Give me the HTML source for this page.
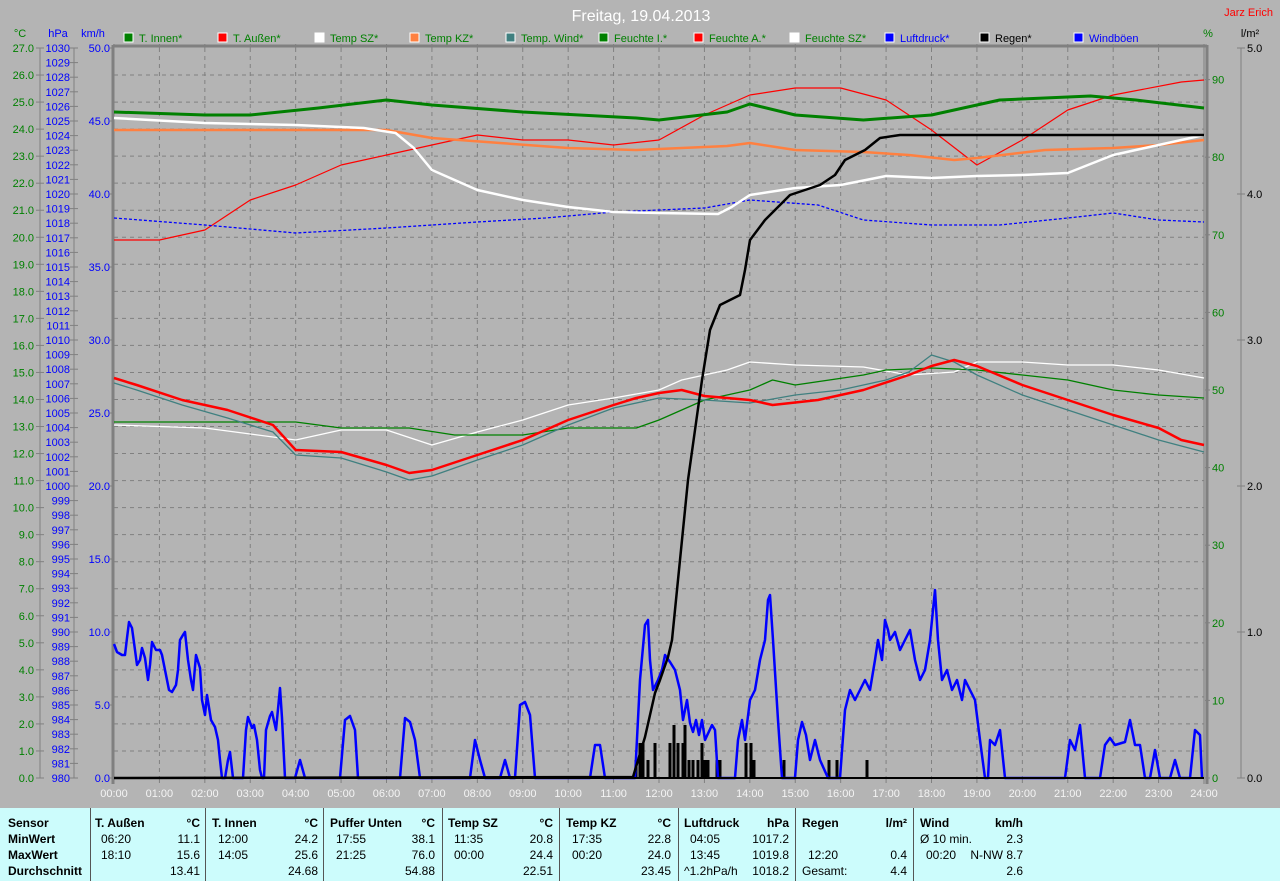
<!DOCTYPE html>
<html><head><meta charset="utf-8">
<style>
html,body{margin:0;padding:0;background:#b4b4b4;}
body{width:1280px;height:881px;overflow:hidden;position:relative;font-family:"Liberation Sans",Arial,sans-serif;}
svg{position:absolute;left:0;top:0;}
#tbl{position:absolute;left:0;top:808px;width:1280px;height:73px;background:#ccfcfc;}
.c{position:absolute;top:0;height:73px;border-left:1px solid #555;}
.t{position:absolute;font-size:12px;color:#000;white-space:nowrap;}
.b{font-weight:bold;}
.r{text-align:right;}
</style></head><body>
<svg id="s" width="1280" height="881" xmlns="http://www.w3.org/2000/svg" font-family="Liberation Sans, Arial, sans-serif"></svg>
<div id="tbl"></div>
<script>
const S=document.getElementById('s');let h='';
const X=t=>114+t*45.417;
const L=114,R=1204,T=48,B=778;
// grid
for(let i=1;i<27;i++){const y=T+i*(730/27);h+=`<line x1="${L}" y1="${y}" x2="${R}" y2="${y}" stroke="#808080" stroke-dasharray="4,4"/>`;}
for(let i=1;i<24;i++){const x=X(i);h+=`<line x1="${x}" y1="${T}" x2="${x}" y2="${B}" stroke="#808080" stroke-dasharray="4,4"/>`;}
// frame
h+=`<line x1="${L-1}" y1="${T-2}" x2="${R+3}" y2="${T-2}" stroke="#808080" stroke-width="3"/>`;
h+=`<line x1="${L-1}" y1="${T-3}" x2="${L-1}" y2="${B+6}" stroke="#808080" stroke-width="3"/>`;
h+=`<line x1="${R}" y1="${T-3}" x2="${R}" y2="${B+6}" stroke="#808080" stroke-width="1"/>`;
h+=`<line x1="${R+3}" y1="${T-3}" x2="${R+3}" y2="${B+6}" stroke="#808080" stroke-width="3"/>`;
// x ticks/labels
for(let i=0;i<=24;i++){const x=X(i);h+=`<line x1="${x}" y1="${B}" x2="${x}" y2="${B+5}" stroke="#808080"/><text x="${x}" y="797" font-size="11" fill="#f4f4f4" text-anchor="middle">${String(i).padStart(2,'0')}:00</text>`;
 h+=`<line x1="${x}" y1="${T-4}" x2="${x}" y2="${T}" stroke="#808080"/>`;}
// left axes
h+=`<line x1="40" y1="${T}" x2="40" y2="${B}" stroke="#808080"/><line x1="74" y1="${T}" x2="74" y2="${B}" stroke="#808080"/>`;
for(let i=0;i<=27;i++){const y=B-i*(730/27);h+=`<line x1="36" y1="${y}" x2="44" y2="${y}" stroke="#808080"/><text x="34" y="${y+4}" font-size="11" fill="#008000" text-anchor="end">${i.toFixed(1)}</text>`;}
for(let i=0;i<=50;i++){const y=B-i*14.6;h+=`<line x1="70" y1="${y}" x2="78" y2="${y}" stroke="#808080"/><text x="70" y="${y+4}" font-size="11" fill="#0000ff" text-anchor="end">${980+i}</text>`;}
for(let i=0;i<=10;i++){const y=B-i*73;h+=`<line x1="110" y1="${y}" x2="114" y2="${y}" stroke="#808080"/><text x="110" y="${y+4}" font-size="11" fill="#0000ff" text-anchor="end">${(i*5).toFixed(1)}</text>`;}
h+=`<text x="20" y="37" font-size="11" fill="#008000" text-anchor="middle">°C</text><text x="58" y="37" font-size="11" fill="#0000ff" text-anchor="middle">hPa</text><text x="93" y="37" font-size="11" fill="#0000ff" text-anchor="middle">km/h</text>`;
// right axes
for(let i=0;i<=9;i++){const y=B-i*77.6;h+=`<line x1="1205" y1="${y}" x2="1210" y2="${y}" stroke="#808080"/><text x="1212" y="${y+4}" font-size="11" fill="#008000">${i*10}</text>`;}
h+=`<line x1="1241" y1="${T}" x2="1241" y2="${B}" stroke="#808080"/>`;
for(let i=0;i<=5;i++){const y=B-i*146;h+=`<line x1="1237" y1="${y}" x2="1245" y2="${y}" stroke="#808080"/><text x="1247" y="${y+4}" font-size="11" fill="#000">${i.toFixed(1)}</text>`;}
h+=`<text x="1208" y="37" font-size="11" fill="#008000" text-anchor="middle">%</text><text x="1250" y="37" font-size="11" fill="#000" text-anchor="middle">l/m²</text>`;
// title
h+=`<text x="641" y="21" font-size="16" fill="#ffffff" text-anchor="middle">Freitag, 19.04.2013</text><text x="1273" y="16" font-size="11" fill="#ff0000" text-anchor="end">Jarz Erich</text>`;
// legend
const lg=[[124,'#008000','T. Innen*','#008000'],[218,'#ff0000','T. Außen*','#008000'],[315,'#ffffff','Temp SZ*','#008000'],[410,'#ff8040','Temp KZ*','#008000'],[506,'#408080','Temp. Wind*','#008000'],[599,'#008000','Feuchte I.*','#008000'],[694,'#ff0000','Feuchte A.*','#008000'],[790,'#ffffff','Feuchte SZ*','#008000'],[885,'#0000ff','Luftdruck*','#0000ff'],[980,'#000000','Regen*','#000000'],[1074,'#0000ff','Windböen','#0000ff']];
lg.forEach(([x,c,t,tc])=>{h+=`<rect x="${x}" y="33" width="9" height="9" fill="${c}" stroke="#fff"/><text x="${x+15}" y="42" font-size="11" fill="${tc}">${t}</text>`;});
function pl(pts,col,w,extra=''){h+=`<polyline fill="none" stroke="${col}" stroke-width="${w}" stroke-linejoin="round" ${extra} points="${pts.map(p=>p.join(',')).join(' ')}"/>`;}
const hp=a=>{const r=[];for(let i=0;i<a.length;i+=2)r.push([X(a[i]),a[i+1]]);return r;};
// rain bars
const bars=[[636,18],[640,35],[643,35],[648,18],[655,35],[670,35],[674,53],[678,35],[683,35],[685,53],[689,18],[693,18],[698,18],[702,35],[705,18],[708,18],[717,18],[720,18],[746,35],[751,35],[754,18],[784,18],[829,18],[837,18],[867,18]];
bars.forEach(([x,hh])=>{h+=`<rect x="${x-1.5}" y="${B-hh}" width="3" height="${hh}" fill="#000"/>`;});
// wind gusts
const wb=[[114,644],[117,652],[122,655],[125,655],[127,638],[129,622],[132,628],[135,650],[137,665],[140,660],[142,648],[145,658],[148,680],[150,665],[152,642],[156,650],[160,650],[162,655],[165,670],[169,690],[172,692],[176,685],[178,670],[180,640],[183,635],[185,632],[188,660],[191,680],[193,690],[196,655],[200,668],[202,700],[205,715],[207,695],[211,720],[215,727],[218,740],[220,760],[222,778],[225,778],[228,760],[230,752],[233,778],[243,778],[246,730],[248,717],[252,728],[254,725],[257,740],[260,770],[262,778],[264,778],[266,730],[270,716],[272,712],[276,730],[280,688],[282,718],[285,778],[295,778],[300,760],[305,778],[340,778],[345,720],[350,716],[355,730],[358,778],[400,778],[405,718],[410,722],[415,740],[420,778],[470,778],[475,740],[480,760],[485,778],[500,778],[505,760],[510,778],[515,778],[520,705],[525,702],[530,715],[535,778],[590,778],[595,745],[600,745],[605,778],[635,778],[640,680],[645,625],[648,620],[650,660],[653,690],[658,680],[662,670],[665,655],[670,662],[675,670],[680,690],[683,720],[687,700],[690,723],[693,732],[696,720],[699,735],[702,720],[705,740],[712,725],[715,730],[718,778],[735,778],[738,740],[742,720],[745,740],[750,700],[755,690],[760,660],[765,640],[768,600],[770,595],[773,640],[778,720],[782,778],[795,778],[798,740],[802,722],[806,735],[810,760],[815,740],[820,760],[828,778],[840,778],[845,710],[850,690],[855,700],[860,690],[865,680],[870,690],[875,660],[878,640],[882,660],[885,620],[888,630],[890,640],[895,632],[900,650],[905,640],[910,630],[915,660],[920,680],[925,670],[930,640],[935,590],[938,640],[942,680],[947,670],[952,690],[957,680],[962,700],[965,680],[970,690],[975,700],[980,740],[985,778],[988,778],[990,740],[995,745],[1000,730],[1005,778],[1065,778],[1070,740],[1075,750],[1080,725],[1085,778],[1100,778],[1105,745],[1110,738],[1115,745],[1125,742],[1130,720],[1135,745],[1140,745],[1145,778],[1150,778],[1155,750],[1160,778],[1170,778],[1175,760],[1180,778],[1190,778],[1195,730],[1200,735],[1202,778]];
pl(wb,'#0000ff',2.5);
h+=`<line x1="${L}" y1="${B}" x2="${R}" y2="${B}" stroke="#000" stroke-width="2"/>`;
// lower group
pl(hp([0,425,2,428,4,440,5,430,6,430,7,445,8,432,9,420,10,405,11,398,12,390,12.5,380,13.5,370,14,362,15,365,16.5,367,17.5,375,18.5,372,19,362,20,362,21,365,22,365,23,370,24,378]),'#ffffff',1.3);
pl(hp([0,422,4,422,5,428,6.5,428,7.5,435,9,435,10,428,11.5,428,12,420,13,400,14,390,14.5,380,15,385,16.5,375,17,370,18,368,19,370,20,375,21,380,22,390,23,395,24,398]),'#008000',1.3);
pl(hp([0,383,0.5,390,1.5,405,2.5,418,3.5,432,4,455,5,458,6,472,6.5,480,7,476,8,460,9,445,10,425,11,408,12,398,13,400,14,403,15,395,16,390,17,380,17.5,372,18,355,18.5,362,19,375,20,395,21,410,22,425,23,440,24,452]),'#408080',1.3);
pl(hp([0,378,0.5,385,1.5,400,2.5,410,3.5,425,4,450,5,452,6,465,6.5,473,7,470,8,455,9,440,10,420,11,405,11.5,398,12,393,12.5,390,13,396,14,400,14.5,405,15.5,400,16.5,390,17.5,375,18,366,18.5,360,19,366,20,385,21,400,22,415,23,428,23.5,440,24,445]),'#ff0000',2.5);
// upper group
pl(hp([0,240,1,240,2,230,3,200,4,185,5,165,6,155,7,145,8,135,9,140,10,140,11,145,12,140,13,115,14,95,15,88,16,88,17,100,18,130,19,165,20,140,21,110,22,95,23.5,82,24,80]),'#ff0000',1.2);
pl(hp([0,218,2,225,4,233,6,228,8,222,9.5,218,11,212,13,208,14,200,15.5,205,16.5,220,18,225,19.5,225,21,218,22,213,23,220,24,222]),'#0000ff',1.3,'stroke-dasharray="3,2"');
pl(hp([0,130,6,130,7,138,8.5,143,10,148,11.5,150,13.5,146,14,143,15,150,16.5,152,17.5,155,18.5,160,19,158,20.5,150,22,148,23,145,24,140]),'#ff8040',2.5);
pl(hp([0,118,2,123,4,125,5.5,128,6.2,133,6.6,148,7,170,8,190,9,200,10,207,11,212,12,213,13.3,214,13.6,207,14,195,15,188,16,185,17,176,18,178,19,176,20,175,21,173,22,155,23,145,24,135]),'#ffffff',2.5);
pl(hp([0,112,2,115,3,115,4.5,108,6,100,7,105,9,112,11.5,118,12,120,13.5,112,14,104,15,115,16.5,120,18,115,19.5,100,21,97,21.5,96,22.5,100,24,108]),'#008000',3);
pl([[114,778],[633,777],[645,737],[655,693],[660,680],[668,657],[672,640],[680,560],[688,480],[695,430],[702,380],[710,330],[720,305],[740,295],[745,270],[750,240],[765,220],[790,195],[820,185],[835,175],[845,160],[865,150],[880,138],[900,135],[1204,135]],'#000000',2.5);
S.innerHTML=h;
// table
const tb=document.getElementById('tbl');let t='';
[90,205,323,442,559,678,795,913].forEach(x=>t+=`<div class="c" style="left:${x}px"></div>`);
const rows=[14,30,46,62];
function tx(x,r,s,cls='',al){t+=`<div class="t ${cls}" style="${al?'right:'+(1280-x)+'px':'left:'+x+'px'};top:${rows[r]-6}px">${s}</div>`;}
['Sensor','MinWert','MaxWert','Durchschnitt'].forEach((s,i)=>tx(8,i,s,'b'));
const cols=[[95,200,'T. Außen','°C',['06:20','18:10',''],['11.1','15.6','13.41']],[212,318,'T. Innen','°C',['12:00','14:05',''],['24.2','25.6','24.68']],[330,435,'Puffer Unten','°C',['17:55','21:25',''],['38.1','76.0','54.88']],[448,553,'Temp SZ','°C',['11:35','00:00',''],['20.8','24.4','22.51']],[566,671,'Temp KZ','°C',['17:35','00:20',''],['22.8','24.0','23.45']],[684,789,'Luftdruck','hPa',['04:05','13:45','^1.2hPa/h'],['1017.2','1019.8','1018.2']],[802,907,'Regen','l/m²',['','12:20','Gesamt:'],['','0.4','4.4']],[920,1023,'Wind','km/h',['Ø 10 min.','00:20',''],['2.3','N-NW 8.7','2.6']]];
cols.forEach(([a,b,n,u,tm,v],ci)=>{tx(a,0,n,'b');tx(b,0,u,'b',1);tm.forEach((s,i)=>{if(s)tx((s.startsWith('^')||s.startsWith('G')||s.startsWith('Ø'))?a:a+6,i+1,s);});v.forEach((s,i)=>{if(s)tx(b,i+1,s,'',1);});});
tb.innerHTML=t;
</script>
</body></html>
